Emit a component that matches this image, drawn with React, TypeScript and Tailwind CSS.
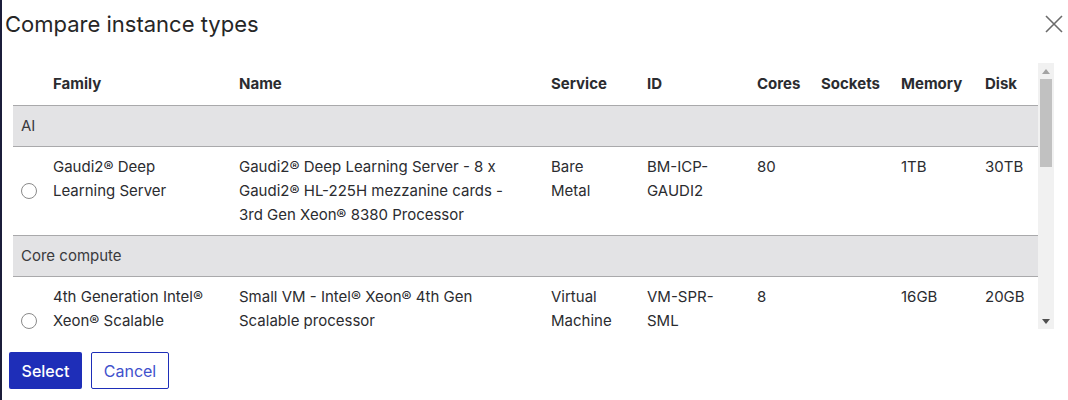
import React from 'react';

type Row = {
  family: string[];
  name: string[];
  service: string[];
  id: string[];
  cores: string;
  sockets: string;
  memory: string;
  disk: string;
};

const groups: { title: string; rows: Row[] }[] = [
  {
    title: 'AI',
    rows: [
      {
        family: ['Gaudi2® Deep', 'Learning Server'],
        name: ['Gaudi2® Deep Learning Server - 8 x', 'Gaudi2® HL-225H mezzanine cards -', '3rd Gen Xeon® 8380 Processor'],
        service: ['Bare', 'Metal'],
        id: ['BM-ICP-', 'GAUDI2'],
        cores: '80',
        sockets: '',
        memory: '1TB',
        disk: '30TB',
      },
    ],
  },
  {
    title: 'Core compute',
    rows: [
      {
        family: ['4th Generation Intel®', 'Xeon® Scalable'],
        name: ['Small VM - Intel® Xeon® 4th Gen', 'Scalable processor'],
        service: ['Virtual', 'Machine'],
        id: ['VM-SPR-', 'SML'],
        cores: '8',
        sockets: '',
        memory: '16GB',
        disk: '20GB',
      },
    ],
  },
];

const Lines = ({ lines }: { lines: string[] }) => (
  <>
    {lines.map((l, i) => (
      <div key={i}>{l}</div>
    ))}
  </>
);

// hand drawn stand-in for the classic scrollbar
const ScrollBar = () => (
  <div className="w-[16px] h-[266px] bg-[#f1f1f1] flex flex-col items-center">
    <div className="h-[16px] flex items-center justify-center">
      <svg width="8" height="5" viewBox="0 0 8 5">
        <path d="M4 0L8 5H0Z" fill="#a3a3a3" />
      </svg>
    </div>
    <div className="w-[12px] h-[88px] bg-[#c1c1c1]" />
    <div className="flex-1" />
    <div className="h-[16px] flex items-center justify-center">
      <svg width="8" height="5" viewBox="0 0 8 5">
        <path d="M0 0H8L4 5Z" fill="#505050" />
      </svg>
    </div>
  </div>
);

export default function App() {
  return (
    <div className="flex w-[1068px] h-[400px] bg-white overflow-hidden text-[#2b2c30]" style={{ fontFamily: 'Inter, "Noto Sans", sans-serif' }}>
      <div className="w-[2px] shrink-0 bg-[#1b1d3a]" />
      <div className="flex flex-col flex-1 min-w-0">
        {/* header */}
        <div className="flex items-start justify-between h-[63px]">
          <h2 className="pl-[3px] pt-[10px] text-[22px] leading-7 font-normal text-[#262626]">Compare instance types</h2>
          <button className="mt-[15px] mr-[5px] text-[#6b6b6b]">
            <svg width="18" height="18" viewBox="0 0 18 18" fill="none" stroke="currentColor" strokeWidth="1.6">
              <path d="M1 1L17 17M17 1L1 17" />
            </svg>
          </button>
        </div>

        {/* table */}
        <div className="flex ml-[11px]">
          <div className="w-[1025px] h-[266px] overflow-hidden">
            <table className="w-[1025px] table-fixed border-collapse text-[15px] leading-6">
              <colgroup>
                <col className="w-[32px]" />
                <col className="w-[186px]" />
                <col className="w-[312px]" />
                <col className="w-[96px]" />
                <col className="w-[110px]" />
                <col className="w-[64px]" />
                <col className="w-[80px]" />
                <col className="w-[84px]" />
                <col className="w-[61px]" />
              </colgroup>
              <thead>
                <tr className="border-b border-[#a9a9ab]">
                  <th className="h-[42px]" />
                  {['Family', 'Name', 'Service', 'ID', 'Cores', 'Sockets', 'Memory', 'Disk'].map((h) => (
                    <th key={h} className="px-2 text-left font-bold text-[#2b2c30] whitespace-nowrap">
                      {h}
                    </th>
                  ))}
                </tr>
              </thead>
              <tbody>
                {groups.map((g) => (
                  <React.Fragment key={g.title}>
                    <tr className="bg-[#e3e3e5] border-b border-[#a9a9ab]">
                      <td colSpan={9} className="px-2 py-2 text-[#3a3a3d]">
                        {g.title}
                      </td>
                    </tr>
                    {g.rows.map((r, i) => (
                      <tr key={i} className="h-[89px] border-b border-[#a9a9ab] align-top">
                        <td className="px-2 align-middle">
                          <span className="block w-4 h-4 rounded-full border border-[#8a8a8a] bg-white" />
                        </td>
                        <td className="px-2 py-2">
                          <Lines lines={r.family} />
                        </td>
                        <td className="px-2 py-2">
                          <Lines lines={r.name} />
                        </td>
                        <td className="px-2 py-2">
                          <Lines lines={r.service} />
                        </td>
                        <td className="px-2 py-2">
                          <Lines lines={r.id} />
                        </td>
                        <td className="px-2 py-2">{r.cores}</td>
                        <td className="px-2 py-2">{r.sockets}</td>
                        <td className="px-2 py-2">{r.memory}</td>
                        <td className="px-2 py-2">{r.disk}</td>
                      </tr>
                    ))}
                  </React.Fragment>
                ))}
              </tbody>
            </table>
          </div>
          <ScrollBar />
        </div>

        {/* footer */}
        <div className="flex gap-[9px] pl-[7px] pt-[23px]">
          <button className="w-[73px] h-[37px] rounded-[2px] bg-[#1e2eb8] text-white text-[16px] font-medium">Select</button>
          <button className="w-[78px] h-[37px] rounded-[2px] border border-[#1e2eb8] bg-white text-[#3f51cc] text-[16px]">Cancel</button>
        </div>
      </div>
    </div>
  );
}
